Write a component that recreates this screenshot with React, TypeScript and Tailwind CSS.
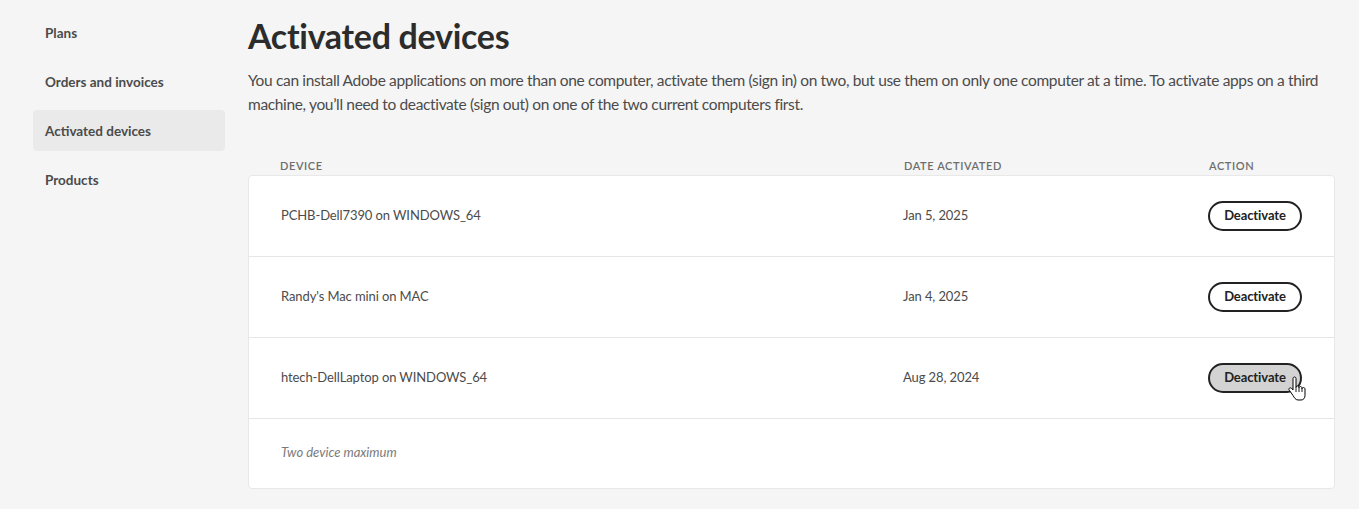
import React from "react";

type Device = {
  name: string;
  date: string;
  hover?: boolean;
};

const devices: Device[] = [
  { name: "PCHB-Dell7390 on WINDOWS_64", date: "Jan 5, 2025" },
  { name: "Randy's Mac mini on MAC", date: "Jan 4, 2025" },
  { name: "htech-DellLaptop on WINDOWS_64", date: "Aug 28, 2024", hover: true },
];

const navItems = ["Plans", "Orders and invoices", "Activated devices", "Products"];

// hand pointer cursor drawn over the hovered button
const HandCursor = () => (
  <svg width="18" height="26" viewBox="0 0 18 26" className="absolute left-[80px] top-[13px]">
    <path
      d="M6.5 1C5.7 1 5 1.7 5 2.5V14L3.6 12.4C3 11.7 2 11.6 1.4 12.2C.8 12.7.8 13.6 1.3 14.2L5 19.5C6 21.2 7.5 24 10 24H13C15.5 24 17 22 17 19.5V13C17 12.2 16.3 11.5 15.5 11.5C14.7 11.5 14 12.2 14 13V12C14 11.2 13.3 10.5 12.5 10.5C11.7 10.5 11 11.2 11 12V11.5C11 10.7 10.3 10 9.5 10C8.7 10 8 10.7 8 11.5V2.5C8 1.7 7.3 1 6.5 1Z"
      fill="#fff"
      stroke="#000"
      strokeWidth="1"
      strokeLinejoin="round"
    />
    <path d="M8 11.5V16M11 12V16M14 13V16" stroke="#000" strokeWidth="0.9" />
  </svg>
);

export default function App() {
  return (
    <div
      className="min-h-[509px] w-full bg-[#f5f5f5] flex text-[#4b4b4b]"
      style={{ fontFamily: "Lato, 'Open Sans', sans-serif" }}
    >
      <div className="w-[248px] shrink-0 pl-[33px] pr-[23px] pt-[12px] flex flex-col gap-[8px]">
        {navItems.map((item) => (
          <div
            key={item}
            className={`h-[41px] flex items-center px-3 pt-[1px] rounded-[4px] text-[13.5px] font-bold text-[#4b4b4b] ${
              item === "Activated devices" ? "bg-[#eaeaea]" : ""
            }`}
          >
            {item}
          </div>
        ))}
      </div>

      <div className="w-[1087px] pt-[14px]">
        <h1 className="text-[34px] leading-[44px] font-bold text-[#2c2c2c] tracking-[-0.3px]">
          Activated devices
        </h1>
        <p className="mt-[10px] text-[15.5px] leading-[24px] tracking-[-0.35px] text-[#4b4b4b]">
          You can install Adobe applications on more than one computer, activate them (sign in) on two, but use them on
          only one computer at a time. To activate apps on a third machine, you’ll need to deactivate (sign out) on one
          of the two current computers first.
        </p>

        <div className="mt-[42px] px-8 grid grid-cols-[1fr_305px_94px] text-[11px] tracking-[0.6px] uppercase text-[#6e6e6e] font-semibold">
          <div>Device</div>
          <div>Date activated</div>
          <div>Action</div>
        </div>

        <div className="mt-0 bg-white rounded-[4px] border border-[#e8e8e8]">
          {devices.map((d) => (
            <div
              key={d.name}
              className="h-[81px] px-8 grid grid-cols-[1fr_305px_94px] items-center border-b border-[#e6e6e6] text-[13px] tracking-[-0.1px]"
            >
              <div>{d.name}</div>
              <div>{d.date}</div>
              <div className="relative">
                <button
                  className={`h-[30px] w-[94px] rounded-full border-2 border-[#222] text-[13px] font-bold text-[#222] ${
                    d.hover ? "bg-[#d3d3d3]" : "bg-white"
                  }`}
                >
                  Deactivate
                </button>
                {d.hover && <HandCursor />}
              </div>
            </div>
          ))}
          <div className="h-[69px] px-8 flex items-center text-[13px] italic text-[#7a7a7a]">
            Two device maximum
          </div>
        </div>
      </div>
    </div>
  );
}
